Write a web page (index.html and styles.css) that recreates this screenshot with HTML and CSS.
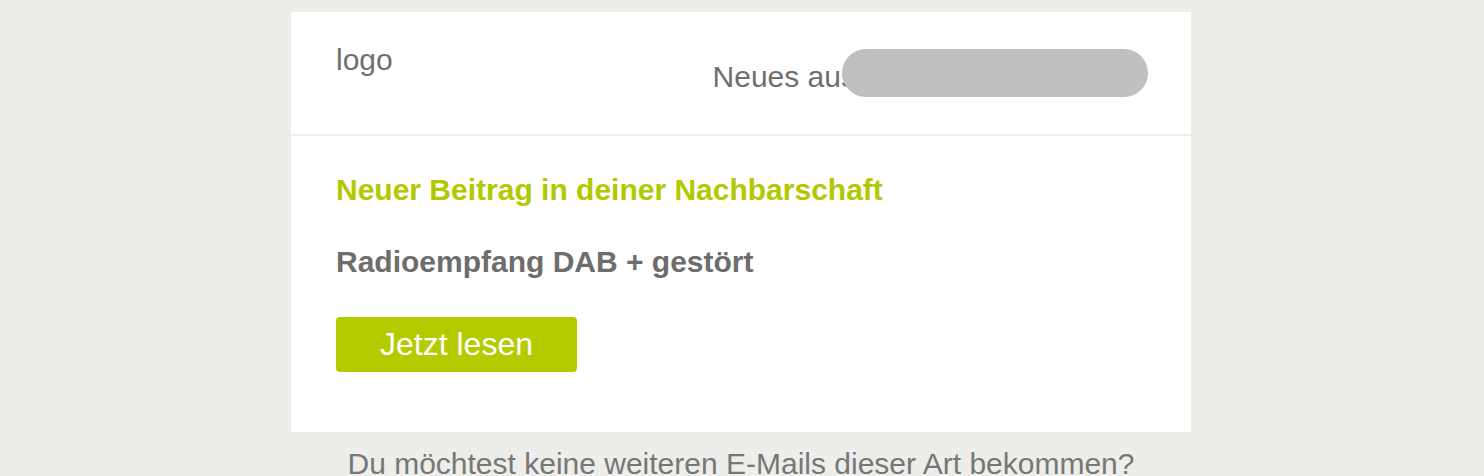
FILE: index.html
```html
<!DOCTYPE html>
<html lang="de">
    <head>
        <meta charset="utf-8">
        <link rel="stylesheet" href="styles.css">
        <title>Neuer Beitrag</title>
    </head>

    <body>
        <div class="mail">
            <!-- header with logo and sender -->
            <div class="mail-head">
                <div class="logo">logo</div>
                <div class="sender">
                    <span class="sender-text">Neues aus</span>
                    <span class="redacted"></span>
                </div>
            </div>

            <div class="mail-body">
                <h1 class="title">Neuer Beitrag in deiner Nachbarschaft</h1>
                <h2 class="subject">Radioempfang DAB + gestört</h2>
                <a class="read-btn" href="#">Jetzt lesen</a>
            </div>
        </div>

        <p class="unsubscribe">Du möchtest keine weiteren E-Mails dieser Art bekommen?</p>
    </body>
</html>
```

FILE: styles.css
```css
* {
    box-sizing: border-box;
    margin: 0;
    padding: 0;
}
body {
    background: #ededea;
    font-family: 'Liberation Sans', Arial, Helvetica, sans-serif;
    font-size: 30px;
    line-height: 36px;
    color: #6f6f6f;
    padding-right: 2px;
}
.mail {
    width: 900px;
    margin: 12px auto 0;
    background: #fff;
}
.mail-head {
    display: flex;
    justify-content: space-between;
    align-items: flex-start;
    height: 124px;
    padding: 30px 43px 0 45px;
    border-bottom: 2px solid #eeeeee;
}
.logo {
    font-weight: normal;
}
.sender {
    display: flex;
    align-items: flex-start;
    margin-top: 17px;
}
.redacted {
    display: block;
    width: 306px;
    height: 48px;
    margin: -10px 0 0 -14px;
    border-radius: 24px;
    background: #c0c0c0;
}
.mail-body {
    padding: 36px 45px 60px;
}
.title {
    font-size: 30px;
    line-height: 36px;
    font-weight: bold;
    color: #b2c800;
}
.subject {
    font-size: 30px;
    line-height: 36px;
    font-weight: bold;
    color: #6d6d6d;
    margin-top: 36px;
}
.read-btn {
    display: inline-block;
    width: 241px;
    height: 55px;
    line-height: 55px;
    margin-top: 37px;
    border-radius: 4px;
    background: #b4cb00;
    color: #fff;
    font-size: 32px;
    text-align: center;
    text-decoration: none;
}
.unsubscribe {
    margin-top: 14px;
    text-align: center;
    color: #777;
}
```
